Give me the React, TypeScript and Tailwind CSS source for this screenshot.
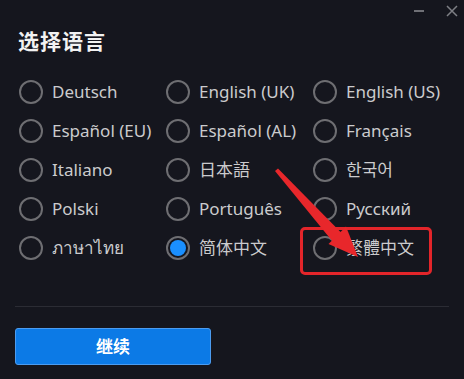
import React from "react";

const langs = [
  "Deutsch", "English (UK)", "English (US)",
  "Español (EU)", "Español (AL)", "Français",
  "Italiano", "日本語", "한국어",
  "Polski", "Português", "Русский",
  "ภาษาไทย", "简体中文", "繁體中文",
];

function Radio({ checked }: { checked: boolean }) {
  return (
    <div className="w-[24px] h-[24px] rounded-full border-2 border-[#6e6e72] flex items-center justify-center shrink-0">
      {checked && <div className="w-[16px] h-[16px] rounded-full bg-[#1a8fff]" />}
    </div>
  );
}

export default function App() {
  return (
    <div
      className="relative w-[464px] h-[379px] bg-[#15161e] overflow-hidden"
      style={{ fontFamily: '"Noto Sans", "Noto Sans CJK SC", sans-serif' }}
    >
      <div className="flex justify-end items-center h-[22px] pr-[6px] gap-[22px] text-[#85868c]">
        <div className="w-[10px] h-[2px] bg-[#6f7076]" />
        <svg width="12" height="12" viewBox="0 0 12 12">
          <path d="M1 1 L11 11 M11 1 L1 11" stroke="#7e7f85" strokeWidth="1.5" />
        </svg>
      </div>
      <div className="pl-[18px] pt-[4px] text-[21px] leading-[28px] font-bold text-[#f2f2f2] tracking-[1px]" style={{ fontFamily: '"Noto Sans CJK SC", serif' }}>
        选择语言
      </div>
      <div className="grid grid-cols-[147px_147px_147px] pl-[19px] mt-[18px]">
        {langs.map((l) => (
          <div key={l} className="h-[39px] flex items-center gap-[9px]">
            <Radio checked={l === "简体中文"} />
            <span className="text-[17px] text-[#cbcbcd] whitespace-nowrap">{l}</span>
          </div>
        ))}
      </div>
      <div className="mx-[15px] mt-[39px] h-[1px] bg-[#2b2c34]" />
      <div className="pl-[15px] mt-[21px]">
        <button className="w-[196px] h-[37px] rounded-[3px] bg-[#0c7ae6] border border-[#4c9cf0] text-white font-bold text-[17px]">
          继续
        </button>
      </div>

      <div className="absolute left-[300px] top-[227px] w-[132px] h-[48px] border-[3px] border-[#e3252a] rounded-[5px]" />
      <svg className="absolute left-0 top-0" width="464" height="379" viewBox="0 0 464 379">
        <polygon points="275,171 278,168.5 341.5,233 333,242" fill="#e8272b" />
        <polygon points="358,257 328.5,244 346,226.5" fill="#e8272b" />
      </svg>
    </div>
  );
}
